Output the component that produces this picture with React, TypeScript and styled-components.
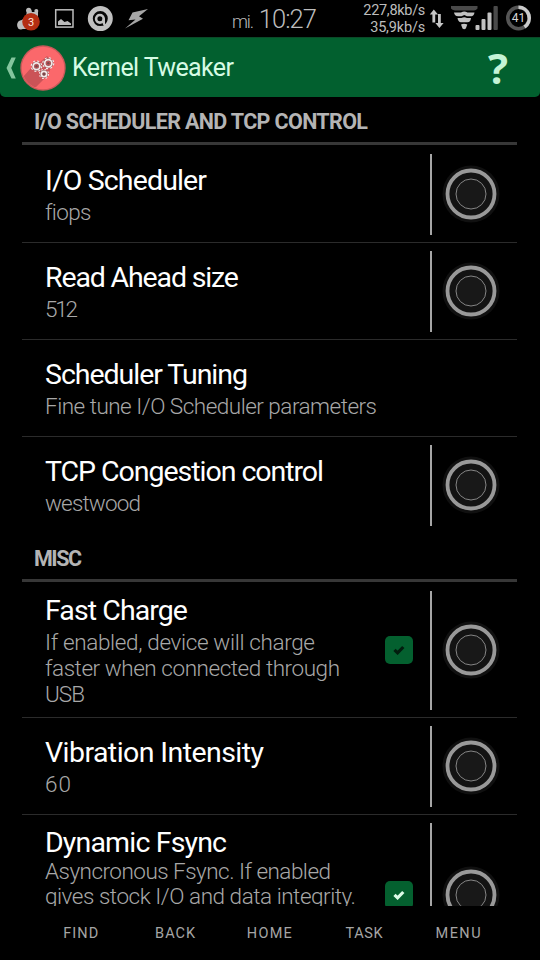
import React, { useLayoutEffect, useRef, useState } from "react";
import styled, { createGlobalStyle } from "styled-components";

const GlobalStyle = createGlobalStyle`
  * { box-sizing: border-box; }
  body { margin: 0; background: #000; font-family: Roboto, "Liberation Sans", sans-serif; }
`;

const Screen = styled.div`
  width: 540px;
  height: 960px;
  display: flex;
  flex-direction: column;
  background: #000;
  overflow: hidden;
`;

const FitLine = styled.span`
  display: block;
  width: max-content;
  white-space: pre;
`;

/* A single line of text whose tracking is adjusted to fill the given width. */
function Fit({ text, width }: { text: string; width: number }) {
  const ref = useRef<HTMLSpanElement>(null);
  const [spacing, setSpacing] = useState(0);
  useLayoutEffect(() => {
    const el = ref.current;
    if (!el) return;
    el.style.letterSpacing = "0px";
    const natural = el.getBoundingClientRect().width;
    setSpacing((width - natural) / Math.max(1, text.length - 1));
  }, [text, width]);
  return <FitLine ref={ref} style={{ letterSpacing: spacing + "px" }}>{text}</FitLine>;
}

const StatusBar = styled.header`
  height: 37px;
  flex: none;
  display: grid;
  grid-template-columns: 232px 131px 1fr;
  color: #bdbdbd;
`;

const StatusIcons = styled.div`
  display: flex;
  align-items: flex-start;
  padding-left: 16px;
`;

const Clock = styled.div`
  display: flex;
  align-items: baseline;
  gap: 6px;
  padding-top: 4px;
  font-weight: 300;
  line-height: 30px;
`;
const Day = styled.span`font-size: 18px;`;
const Time = styled.span`font-size: 25.5px;`;

const StatusRight = styled.div`display: flex;`;
const Speeds = styled.div`
  width: 62px;
  margin-right: 1px;
  padding-top: 2px;
  display: flex;
  flex-direction: column;
  align-items: flex-end;
  font-size: 14.5px;
  line-height: 17px;
`;

const ActionBar = styled.div`
  height: 60px;
  flex: none;
  display: flex;
  align-items: center;
  background: #02602f;
  border-top: 1px solid #0b4a28;
  border-radius: 0 0 5px 5px;
`;
const AppTitle = styled.h1`
  margin: 1px 0 0 6px;
  flex: 1;
  font-size: 25px;
  line-height: 30px;
  font-weight: 400;
  color: #d6fbe4;
`;
const Help = styled.button`
  width: 60px;
  margin-right: 12px;
  padding: 0;
  border: 0;
  background: none;
  font: 700 42px/56px "Open Sans", sans-serif;
  color: #c4f3d6;
`;

const List = styled.main`
  height: 809px;
  flex: none;
  overflow: hidden;
  padding: 0 23px 0 22px;
`;

const SectionHeader = styled.h2`
  height: 48px;
  margin: 0 0 1px;
  padding: 12px 0 0 12px;
  border-bottom: 3px solid #373737;
  font-size: 21.5px;
  line-height: 26px;
  font-weight: 700;
  color: #b4b4b4;
`;

const Row = styled.section<{ $height?: number; $last?: boolean }>`
  height: ${(p) => p.$height ?? 97}px;
  display: flex;
  align-items: center;
  padding-left: 23px;
  border-bottom: 1px solid ${(p) => (p.$last ? "transparent" : "#2b2b2b")};
`;
const RowText = styled.div`
  flex: 1;
  padding-top: 1px;
`;
const RowTitle = styled.h3`
  margin: 0;
  font-size: 28.5px;
  line-height: 33px;
  font-weight: 400;
  color: #fff;
`;
const Summary = styled.div<{ $tight?: boolean }>`
  padding: ${(p) => (p.$tight ? "0 0 5.5px" : "1.5px 0 0")};
  font-size: 22.5px;
  line-height: ${(p) => (p.$tight ? 25 : 26)}px;
  font-weight: 300;
  color: #a8a8a8;
`;
const SummaryLine = styled.div`min-height: 25px;`;
const Check = styled.div`
  width: 28px;
  height: 28px;
  margin-right: 17px;
  border-radius: 5px;
  background: #04602f;
  display: grid;
  place-items: center;
`;
const BootToggle = styled.div`
  align-self: stretch;
  width: 87px;
  margin: 8px 0 7px;
  border-left: 2px solid #a6a6a6;
  display: flex;
  align-items: center;
  padding: 0 0 1px 9.7px;
`;

const NavBar = styled.nav`
  flex: 1;
  display: grid;
  grid-template-columns: repeat(5, 94.4px);
  justify-content: center;
  align-items: center;
  justify-items: center;
  font-size: 14.5px;
  font-weight: 400;
  color: #a5a5a5;
`;

const Dial = () => (
  <svg width="58" height="58" viewBox="0 0 58 58">
    <circle cx="29" cy="29" r="28.5" fill="#101010" />
    <circle cx="29" cy="29" r="23.5" fill="#131313" stroke="#999" strokeWidth="3.8" />
    <circle cx="29" cy="29" r="15" fill="#181818" stroke="#858585" strokeWidth="1" />
  </svg>
);

const Tick = ({ color }: { color: string }) => (
  <svg width="12" height="10" viewBox="0 0 12 10">
    <path d="M1.5 4.8 4.6 7.8 10.3 2" fill="none" stroke={color} strokeWidth="3.2" />
  </svg>
);

const NotificationIcons = () => (
  <svg width="136" height="37" viewBox="16 0 136 37">
    <g fill="#bcbcbc">
      <circle cx="28.7" cy="10.3" r="2.6" />
      <circle cx="36.3" cy="11" r="2" />
      <path d="M27 9.5H31L32 12H35.5L38 11V18H26Z" />
      <ellipse cx="20.8" cy="25" rx="3.7" ry="4.6" />
      <path d="M20 21 25 18 29 29H21Z" />
    </g>
    <circle cx="31" cy="21.7" r="8.8" fill="#b42d12" />
    <text x="31" y="25.7" fontSize="11" fill="#ffe6df" textAnchor="middle">3</text>
    <rect x="55.7" y="9.8" width="17.3" height="17.3" fill="none" stroke="#bcbcbc" strokeWidth="1.5" />
    <path d="M58 25V21.5L61 19 64.5 22 67.5 21 71 23.5V25Z" fill="#bcbcbc" />
    <circle cx="100.3" cy="18.6" r="10" fill="#060606" stroke="#c0c0c0" strokeWidth="5" />
    <circle cx="99.9" cy="18.8" r="3.8" fill="none" stroke="#c0c0c0" strokeWidth="2.6" />
    <path d="M103.8 18.6V23.2Q104 25 106 26" fill="none" stroke="#c0c0c0" strokeWidth="2.4" />
    <path d="M148 9 132.5 12.5 128.5 20.2 135.5 19.5 125 28.5 143 18.8 139 16.2Z" fill="#a6a6a6" />
  </svg>
);

const SystemIcons = () => (
  <svg width="114" height="37" viewBox="426 0 114 37">
    <g fill="#c6c6c6">
      <path d="M433.8 9.5 438 14.5H435.2V22.5H432.4V14.5H429.8Z" />
      <path d="M439.4 28 443.6 23H440.8V14H438V23H435.4Z" />
    </g>
    <path d="M451 6H477.5V8.5Q476 10.5 474 10.5H455Q452 10 451 8.5Z" fill="#4a4a4a" />
    <g fill="#c2c2c2">
      <path d="M454 12.4H461Q464.3 10.4 467.5 12.4H474.5Q474 16.3 470 16.3H467L464.3 15 461.5 16.3H458Q454.5 16 454 12.4Z" />
      <path d="M457.5 18H461.5Q464.3 16.6 467 18H471Q470.5 22.3 467.5 22.3H461Q458 22 457.5 18Z" />
      <path d="M461 24.5Q464 23 467.3 24.5L465.8 28.5Q464.3 30 462.5 28.5Z" />
      <rect x="475.5" y="25" width="4" height="5" rx="1" />
      <rect x="481.5" y="19" width="4" height="11" rx="1" />
      <rect x="487.5" y="12.5" width="4" height="17.5" rx="1" />
    </g>
    <rect x="493.5" y="6" width="4.3" height="24" rx="1" fill="#4a4a4a" />
    <circle cx="518.5" cy="18" r="10.7" fill="none" stroke="#555" strokeWidth="3.6" />
    <path d="M518.5 7.3A10.7 10.7 0 0 1 524.5 26.9" fill="none" stroke="#cbcbcb" strokeWidth="3.6" />
    <text x="518.5" y="22.3" fontSize="12" fill="#d8d8d8" textAnchor="middle">41</text>
  </svg>
);

const BackChevron = () => (
  <svg width="20" height="30" viewBox="0 0 20 30">
    <path d="M11.5 4.5H15.8L11.2 15 15.8 25.5H11.5L6.5 15Z" fill="#83c69e" />
  </svg>
);

const Gear = ({ x, y, r }: { x: number; y: number; r: number }) => (
  <g transform={`translate(${x} ${y})`} fill="none">
    <circle r={r + 1.4} stroke="#f6eeee" strokeWidth="2" strokeDasharray={`${((r + 1.4) * Math.PI) / 8}`} />
    <circle r={r} stroke="#8d5558" strokeWidth="2.8" />
    <circle r={r} stroke="#f3e9e8" strokeWidth="1.8" />
    <circle r="1.2" fill="#77484b" />
  </g>
);

const AppIcon = () => (
  <svg width="46" height="46" viewBox="0 0 46 46">
    <defs>
      <clipPath id="disc"><circle cx="23" cy="23" r="21" /></clipPath>
    </defs>
    <circle cx="23" cy="23" r="22.7" fill="#c9595a" />
    <circle cx="23" cy="23" r="21.3" fill="#fb686b" />
    <path d="M11 23 3 32 8 44 16 42 28 30 33 18 27 11 20 17Z" fill="#cb5357" clipPath="url(#disc)" />
    <Gear x={16.5} y={21.2} r={3.4} />
    <Gear x={28.3} y={18.2} r={3.6} />
    <Gear x={24} y={29} r={2.7} />
  </svg>
);

type Setting = {
  title: [string, number];
  lines: [string, number][];
  height?: number;
  check?: string;
  dial?: boolean;
  last?: boolean;
  tight?: boolean;
};

const ioSettings: Setting[] = [
  { title: ["I/O Scheduler", 162], lines: [["fiops", 46]], dial: true },
  { title: ["Read Ahead size", 194], lines: [["512", 33]], dial: true },
  { title: ["Scheduler Tuning", 203], lines: [["Fine tune I/O Scheduler parameters", 332]] },
  { title: ["TCP Congestion control", 279], lines: [["westwood", 96]], dial: true, last: true },
];

const miscSettings: Setting[] = [
  {
    title: ["Fast Charge", 143],
    lines: [["If enabled, device will charge", 270], ["faster when connected through", 295], ["USB", 40]],
    height: 135,
    check: "#021d0e",
    dial: true,
  },
  { title: ["Vibration Intensity", 219], lines: [["60", 26]], dial: true },
  {
    title: ["Dynamic Fsync", 182],
    lines: [["Asyncronous Fsync. If enabled", 286], ["gives stock I/O and data integrity.", 311], ["", 0], ["", 0]],
    height: 161,
    check: "#dcfbe8",
    dial: true,
    tight: true,
  },
];

const SettingRow = ({ s }: { s: Setting }) => (
  <Row $height={s.height} $last={s.last}>
    <RowText>
      <RowTitle><Fit text={s.title[0]} width={s.title[1]} /></RowTitle>
      <Summary $tight={s.tight}>
        {s.lines.map(([text, width], i) => (
          <SummaryLine key={i}>{text && <Fit text={text} width={width} />}</SummaryLine>
        ))}
      </Summary>
    </RowText>
    {s.check && <Check><Tick color={s.check} /></Check>}
    {s.dial && <BootToggle><Dial /></BootToggle>}
  </Row>
);

const navItems: [string, number][] = [["FIND", 35], ["BACK", 40], ["HOME", 45], ["TASK", 37], ["MENU", 45]];

export default function App() {
  return (
    <>
      <GlobalStyle />
      <Screen>
        <StatusBar>
          <StatusIcons><NotificationIcons /></StatusIcons>
          <Clock>
            <Day><Fit text="mi." width={22} /></Day>
            <Time><Fit text="10:27" width={58} /></Time>
          </Clock>
          <StatusRight>
            <Speeds>
              <Fit text="227,8kb/s" width={62} />
              <Fit text="35,9kb/s" width={55} />
            </Speeds>
            <SystemIcons />
          </StatusRight>
        </StatusBar>
        <ActionBar>
          <BackChevron />
          <AppIcon />
          <AppTitle><Fit text="Kernel Tweaker" width={162} /></AppTitle>
          <Help>?</Help>
        </ActionBar>
        <List>
          <SectionHeader><Fit text="I/O SCHEDULER AND TCP CONTROL" width={334} /></SectionHeader>
          {ioSettings.map((s) => <SettingRow key={s.title[0]} s={s} />)}
          <SectionHeader><Fit text="MISC" width={48} /></SectionHeader>
          {miscSettings.map((s) => <SettingRow key={s.title[0]} s={s} />)}
        </List>
        <NavBar>
          {navItems.map(([text, width]) => <Fit key={text} text={text} width={width} />)}
        </NavBar>
      </Screen>
    </>
  );
}
